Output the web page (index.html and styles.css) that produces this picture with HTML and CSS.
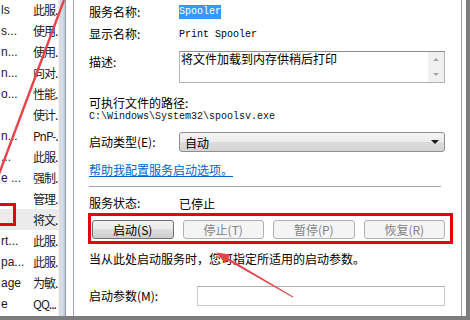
FILE: index.html
```html
<!DOCTYPE html>
<html lang="zh-CN">
<head>
  <meta charset="UTF-8" />
  <meta name="viewport" content="width=device-width, initial-scale=1" />
  <title>Print Spooler 属性</title>
  <link rel="stylesheet" href="styles.css">
</head>
<body>

  <div class="screen">

    <div class="list">
      <div class="row"><span class="c1">ls</span><span class="c2">此服.</span></div>
      <div class="row"><span class="c1">s...</span><span class="c2">使用.</span></div>
      <div class="row"><span class="c1">n...</span><span class="c2">使用.</span></div>
      <div class="row"><span class="c1">n...</span><span class="c2">向对.</span></div>
      <div class="row"><span class="c1">o...</span><span class="c2">性能.</span></div>
      <div class="row"><span class="c1"></span><span class="c2">使计.</span></div>
      <div class="row"><span class="c1">n...</span><span class="c2">PnP-.</span></div>
      <div class="row"><span class="c1">...</span><span class="c2">此服.</span></div>
      <div class="row"><span class="c1">e ...</span><span class="c2">强制.</span></div>
      <div class="row"><span class="c1"></span><span class="c2">管理.</span></div>
      <div class="row current"><span class="c1"></span><span class="c2">将文.</span></div>
      <div class="row"><span class="c1">rt...</span><span class="c2">此服.</span></div>
      <div class="row"><span class="c1">pa...</span><span class="c2">此服.</span></div>
      <div class="row"><span class="c1">age</span><span class="c2">为敏.</span></div>
      <div class="row"><span class="c1">e</span><span class="c2">QQ...</span></div>
    </div>
    <div class="shade"></div>
    <div class="strip"></div>
    <div class="gutter"></div>

    <div class="dialog">
      <div class="field first">
        <span class="label">服务名称:</span>
        <span class="mono"><span class="sel">Spooler</span></span>
      </div>
      <div class="field second">
        <span class="label">显示名称:</span>
        <span class="mono">Print Spooler</span>
      </div>
      <div class="field desc">
        <span class="label">描述:</span>
        <div class="textbox">
          <span class="desc-text">将文件加载到内存供稍后打印</span>
          <div class="vscroll">
            <span class="arr up"></span>
            <span class="arr down"></span>
          </div>
        </div>
      </div>
      <div class="plain path-label">可执行文件的路径:</div>
      <div class="mono path">C:\Windows\System32\spoolsv.exe</div>
      <div class="field type">
        <span class="label">启动类型(E):</span>
        <div class="combo">
          <span>自动</span>
          <span class="caret"></span>
        </div>
      </div>
      <a class="help" href="#">帮助我配置服务启动选项。</a>
      <div class="sep"></div>
      <div class="field status">
        <span class="label">服务状态:</span>
        <span>已停止</span>
      </div>
      <div class="buttons">
        <button class="btn">启动(S)</button>
        <button class="btn" disabled>停止(T)</button>
        <button class="btn" disabled>暂停(P)</button>
        <button class="btn" disabled>恢复(R)</button>
      </div>
      <div class="plain hint">当从此处启动服务时，您可指定所适用的启动参数。</div>
      <div class="field params">
        <span class="label wide">启动参数(M):</span>
        <div class="input"></div>
      </div>
    </div>

    <div class="frame-right"></div>

    <div class="mark mark-buttons"></div>
    <div class="mark mark-row"></div>
    <svg class="marks" width="470" height="316" viewBox="0 0 470 316">
      <line x1="64" y1="0" x2="-1" y2="174" stroke="#e8434b" stroke-width="2.4" />
      <polygon points="228.1,257.9 226.8,260.1 292.8,297.4 293.2,296.6" fill="#e8434b" />
      <polygon points="216,252.5 230.6,254.4 225.2,263.6" fill="#e8434b" />
    </svg>
  </div>

</body>
</html>
```

FILE: styles.css
```css
body {
  margin: 0;
  font-family: "Noto Sans CJK SC", "Liberation Sans", sans-serif;
  font-size: 12px;
  color: #000000;
  background-color: #ffffff;
}

.screen {
  position: relative;
  display: flex;
  width: 470px;
  height: 316px;
  border-bottom: 4px solid #7d7d7d;
  overflow: hidden;
}

/* service list behind the dialog */
.list {
  width: 58px;
  margin-top: -1px;
  overflow: hidden;
}

.row {
  display: flex;
  height: 21px;
  align-items: center;
  white-space: nowrap;
}

.row.current {
  background-color: #ebebeb;
}

.c1 {
  width: 32px;
  flex-shrink: 0;
  padding-left: 1px;
  font-family: "Liberation Sans", sans-serif;
  color: #1a1a1a;
}

.c2 {
  letter-spacing: -1px;
  color: #1a1a1a;
}

.shade {
  width: 3px;
  background: linear-gradient(to right, #f4f4f4, #cfcfcf);
}

.strip {
  width: 4px;
  background: linear-gradient(to right, #dde7f2, #b7c9de);
}

.gutter {
  width: 7px;
  border-left: 1px solid #9a9a9a;
  border-right: 1px solid #a3a3a3;
  background-color: #ffffff;
}

/* properties dialog */
.dialog {
  width: 356px;
  padding: 0 16px 0 15px;
  display: flex;
  flex-direction: column;
}

.field {
  display: flex;
  align-items: center;
}

.label {
  width: 90px;
  flex-shrink: 0;
  line-height: 16px;
}

.label.wide {
  width: 108px;
}

.first {
  height: 23px;
}

.second {
  height: 22px;
}

.mono {
  font-family: "Liberation Mono", monospace;
  font-size: 10px;
}

.sel {
  background-color: #3399ff;
  color: #ffffff;
  padding: 1px 0 2px;
}

.desc {
  margin-top: 6px;
  align-items: flex-start;
}

.desc .label {
  padding-top: 3px;
}

.textbox {
  flex: 1;
  height: 32px;
  box-sizing: border-box;
  border: 1px solid #b4b4b4;
  border-top-color: #8e8f8f;
  display: flex;
}

.desc-text {
  flex: 1;
  line-height: 14px;
  padding-left: 1px;
}

.vscroll {
  width: 16px;
  background-color: #f0f0f0;
  display: flex;
  flex-direction: column;
  align-items: center;
  justify-content: space-around;
}

.arr {
  width: 0;
  height: 0;
  border-left: 3px solid transparent;
  border-right: 3px solid transparent;
}

.arr.up {
  border-bottom: 3px solid #a5a5a5;
}

.arr.down {
  border-top: 3px solid #a5a5a5;
}

.plain {
  line-height: 16px;
}

.path-label {
  margin-top: 12px;
}

.path {
  line-height: 12px;
  color: #111111;
}

.type {
  margin-top: 9px;
  height: 20px;
}

.combo {
  flex: 1;
  height: 20px;
  box-sizing: border-box;
  border: 1px solid #8e8f8f;
  border-radius: 3px;
  background: linear-gradient(#f4f4f4, #ebebeb 50%, #dcdcdc 50%, #d4d4d4);
  display: flex;
  align-items: center;
  justify-content: space-between;
  padding: 0 5px 0 5px;
}

.caret {
  width: 0;
  height: 0;
  border-left: 4px solid transparent;
  border-right: 4px solid transparent;
  border-top: 4px solid #1a1a1a;
}

.help {
  margin-top: 10px;
  line-height: 16px;
  color: #0066cc;
  align-self: flex-start;
}

.sep {
  margin-top: 8px;
  margin-right: 4px;
  height: 1px;
  background-color: #a0a0a0;
}

.status {
  margin-top: 8px;
  height: 16px;
}

.buttons {
  margin-top: 9px;
  padding-left: 3px;
  display: grid;
  grid-template-columns: repeat(4, 1fr);
  gap: 9px;
}

.btn {
  height: 19px;
  padding: 0;
  font-family: "Noto Sans CJK SC", "Liberation Sans", sans-serif;
  font-size: 12px;
  color: #000000;
  border: 1px solid #707070;
  border-radius: 3px;
  background: linear-gradient(#f2f2f2, #ebebeb 50%, #dddddd 50%, #cfcfcf);
}

.btn:disabled {
  color: #838383;
  border-color: #adb2b5;
  background: #f4f4f4;
}

.hint {
  margin-top: 12px;
}

.params {
  margin-top: 19px;
  height: 20px;
}

.input {
  flex: 1;
  height: 20px;
  box-sizing: border-box;
  border: 1px solid #c8c8c8;
  border-top-color: #b0b0b0;
}

.frame-right {
  width: 4px;
  border-left: 1px solid #9f9f9f;
  border-right: 4px solid #7d7d7d;
}

/* red annotations drawn over the screenshot */
.mark {
  position: absolute;
  box-sizing: border-box;
  border: 3px solid #e3000f;
}

.mark-buttons {
  left: 88px;
  top: 213px;
  width: 365px;
  height: 31px;
}

.mark-row {
  left: -4px;
  top: 203px;
  width: 20px;
  height: 23px;
}

.marks {
  position: absolute;
  left: 0;
  top: 0;
}
```
